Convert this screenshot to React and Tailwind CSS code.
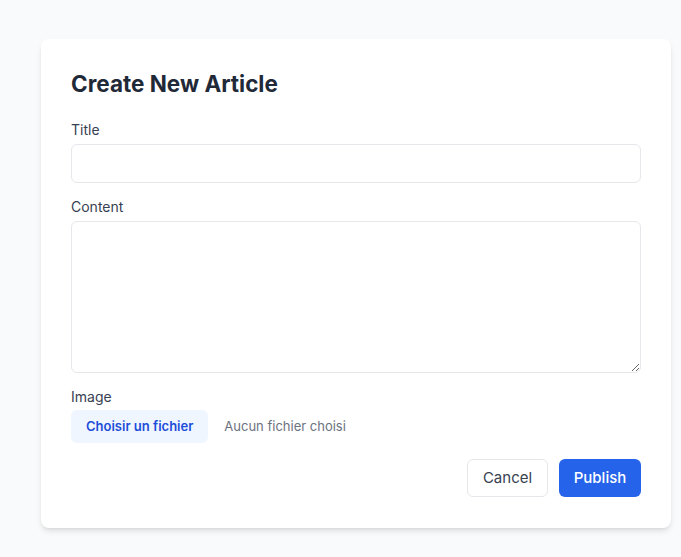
import { useState } from 'react';

const App = () => {
    const [formData, setFormData] = useState({ title: '', content: '' });

    const handleChange = (e) => {
        setFormData({ ...formData, [e.target.id]: e.target.value });
    };

    return (
        <div
            className="min-h-screen bg-[#f9fafb] pt-[39px] pl-[41px]"
            style={{ fontFamily: 'Inter, "Noto Sans", sans-serif' }}
        >
            <form className="w-[630px] bg-white rounded-lg shadow-md px-[30px] pt-[29px] pb-[31px]">
                <h2 className="text-[22.5px] leading-8 font-bold text-[#1f2937] mb-5">Create New Article</h2>

                <label htmlFor="title" className="block text-sm leading-5 text-[#374151] mb-1">
                    Title
                </label>
                <input
                    id="title"
                    type="text"
                    value={formData.title}
                    onChange={handleChange}
                    className="block w-full h-[39px] px-3 border border-[#e5e7eb] rounded-md focus:outline-none"
                />

                <label htmlFor="content" className="block text-sm leading-5 text-[#374151] mt-[14px] mb-1">
                    Content
                </label>
                <textarea
                    id="content"
                    value={formData.content}
                    onChange={handleChange}
                    className="block w-full h-[152px] px-3 py-2 border border-[#e5e7eb] rounded-md focus:outline-none"
                />

                <label className="block text-sm leading-5 text-[#374151] mt-[14px] mb-[3px]">
                    Image
                </label>
                <div className="flex items-center">
                    <span className="h-[33px] px-[15px] flex items-center rounded-md bg-[#eff6ff] text-[#1d4ed8] text-[13px] font-semibold">
                        Choisir un fichier
                    </span>
                    <span className="ml-4 text-[13px] text-[#6b7280]">Aucun fichier choisi</span>
                </div>

                <div className="flex justify-end gap-[11px] mt-4">
                    <button
                        type="button"
                        className="h-[38px] w-[81px] rounded-md border border-[#e5e7eb] text-[#374151] text-[15px]"
                    >
                        Cancel
                    </button>
                    <button
                        type="submit"
                        className="h-[38px] w-[82px] rounded-md bg-[#2563eb] text-white text-[15px] font-medium"
                    >
                        Publish
                    </button>
                </div>
            </form>
        </div>
    );
};

export default App;
